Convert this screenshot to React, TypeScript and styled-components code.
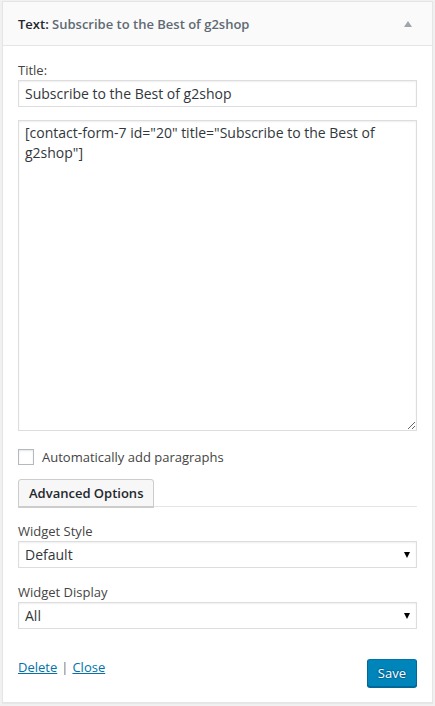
import styled, { createGlobalStyle } from "styled-components";

const GlobalStyle = createGlobalStyle`
  html, body {
    margin: 0;
    padding: 0;
    background: #f1f1f1;
  }
  body {
    font-family: "Open Sans", "Liberation Sans", sans-serif;
    font-size: 13px;
    color: #444;
  }
  * {
    box-sizing: border-box;
  }
`;

export default function App() {
  return (
    <>
      <GlobalStyle />
      <Page>
        <WidgetBox>
          <WidgetTop>
            <WidgetTitle>
              Text: <InWidgetTitle>Subscribe to the Best of g2shop</InWidgetTitle>
            </WidgetTitle>
            <ToggleArrow />
          </WidgetTop>
          <WidgetInside>
            <FieldLabel>Title:</FieldLabel>
            <TextInput defaultValue="Subscribe to the Best of g2shop" />
            <TextArea
              defaultValue={'[contact-form-7 id="20" title="Subscribe to the Best of g2shop"]'}
            />
            <CheckRow>
              <Checkbox type="checkbox" />
              <CheckLabel>Automatically add paragraphs</CheckLabel>
            </CheckRow>
            <TabBar>
              <TabButton>Advanced Options</TabButton>
            </TabBar>
            <FieldLabel $spaced>Widget Style</FieldLabel>
            <SelectWrap>
              <Select defaultValue="Default">
                <option>Default</option>
              </Select>
            </SelectWrap>
            <FieldLabel $spaced>Widget Display</FieldLabel>
            <SelectWrap>
              <Select defaultValue="All">
                <option>All</option>
              </Select>
            </SelectWrap>
            <Footer>
              <Links>
                <Link href="#">Delete</Link>
                <Pipe>|</Pipe>
                <Link href="#">Close</Link>
              </Links>
              <SaveButton>Save</SaveButton>
            </Footer>
          </WidgetInside>
        </WidgetBox>
      </Page>
    </>
  );
}

const Page = styled.div`
  padding: 1px 2px 4px 2px;
`;

const WidgetBox = styled.div`
  width: 431px;
  background: #fff;
  border: 1px solid #e5e5e5;
  box-shadow: 0 1px 1px rgba(0, 0, 0, 0.04);
`;

const WidgetTop = styled.div`
  height: 44px;
  background: #fafafa;
  border-bottom: 1px solid #e5e5e5;
  display: flex;
  align-items: center;
  justify-content: space-between;
  padding: 0 20px 0 15px;
`;

const WidgetTitle = styled.h3`
  margin: 0;
  font-size: 13px;
  font-weight: 600;
  color: #23282d;
`;

const InWidgetTitle = styled.span`
  font-weight: 600;
  color: #606a73;
`;

const ToggleArrow = styled.span`
  width: 0;
  height: 0;
  border-left: 4px solid transparent;
  border-right: 4px solid transparent;
  border-bottom: 6px solid #a0a5aa;
`;

const WidgetInside = styled.div`
  display: flex;
  flex-direction: column;
  padding: 14px 15px 15px 15px;
`;

const FieldLabel = styled.label<{ $spaced?: boolean }>`
  display: block;
  line-height: 20px;
  margin-top: ${(p) => (p.$spaced ? "14px" : "0")};
  color: #444;
`;

const fieldBase = `
  width: 100%;
  border: 1px solid #ddd;
  box-shadow: inset 0 1px 2px rgba(0, 0, 0, 0.07);
  background: #fff;
  color: #32373c;
  font-family: "Open Sans", "Liberation Sans", sans-serif;
  font-size: 14px;
  outline: none;
  margin: 0;
`;

const TextInput = styled.input`
  ${fieldBase}
  height: 27px;
  padding: 0 6px;
`;

const TextArea = styled.textarea`
  ${fieldBase}
  height: 311px;
  margin-top: 13px;
  padding: 2px 6px;
  line-height: 20px;
  resize: vertical;
`;

const CheckRow = styled.div`
  display: flex;
  align-items: center;
  gap: 8px;
  margin-top: 18px;
`;

const Checkbox = styled.input`
  appearance: none;
  width: 16px;
  height: 16px;
  margin: 0;
  border: 1px solid #b4b9be;
  background: #fff;
  box-shadow: inset 0 1px 2px rgba(0, 0, 0, 0.1);
`;

const CheckLabel = styled.span`
  line-height: 16px;
  color: #444;
`;

const TabBar = styled.div`
  margin-top: 14px;
  border-bottom: 1px solid #e5e5e5;
  display: flex;
`;

const TabButton = styled.button`
  height: 28px;
  padding: 0 10px;
  margin-bottom: -1px;
  background: #f7f7f7;
  border: 1px solid #ccc;
  border-radius: 3px 3px 0 0;
  box-shadow: 0 1px 0 #ccc;
  color: #23282d;
  font-family: "Open Sans", "Liberation Sans", sans-serif;
  font-size: 13px;
  font-weight: 600;
  cursor: pointer;
`;

const SelectWrap = styled.div`
  position: relative;
  &::after {
    content: "";
    position: absolute;
    right: 7px;
    top: 11px;
    border-left: 3.5px solid transparent;
    border-right: 3.5px solid transparent;
    border-top: 6px solid #000;
    pointer-events: none;
  }
`;

const Select = styled.select`
  ${fieldBase}
  appearance: none;
  height: 27px;
  padding: 0 6px;
  border-radius: 0;
`;

const Footer = styled.div`
  display: flex;
  justify-content: space-between;
  align-items: flex-start;
  margin-top: 30px;
`;

const Links = styled.div`
  display: flex;
  gap: 4px;
  line-height: 18px;
  margin-top: -1px;
`;

const Link = styled.a`
  color: #0073aa;
  text-decoration: underline;
`;

const Pipe = styled.span`
  color: #72777c;
`;

const SaveButton = styled.button`
  height: 28px;
  padding: 0 10px;
  background: #0085ba;
  border: 1px solid;
  border-color: #0073aa #006799 #006799;
  border-radius: 3px;
  box-shadow: 0 1px 0 #006799;
  color: #fff;
  font-family: "Open Sans", "Liberation Sans", sans-serif;
  font-size: 13px;
  text-shadow: 0 -1px 1px #006799, 1px 0 1px #006799, 0 1px 1px #006799, -1px 0 1px #006799;
  cursor: pointer;
`;
